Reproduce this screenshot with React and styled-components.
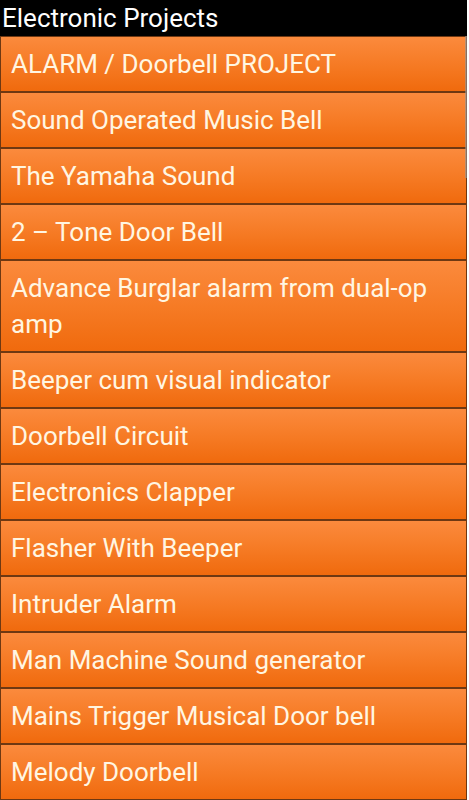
import React from 'react';
import styled, { createGlobalStyle } from 'styled-components';

const GlobalStyle = createGlobalStyle`
  html, body {
    margin: 0;
    padding: 0;
    background: #fff;
  }
  body {
    font-family: Roboto, "Noto Sans", sans-serif;
  }
`

const STScreen = styled.div`
  position: relative;
  width: 467px;
  height: 800px;
  overflow: hidden;
  display: flex;
  flex-direction: column;
`
const STHeader = styled.div`
  height: 36px;
  background: #000;
  color: #fff;
  font-size: 26px;
  line-height: 36px;
  padding-left: 2px;
  flex-shrink: 0;
  white-space: nowrap;
`
const STList = styled.div`
  display: flex;
  flex-direction: column;
`
const STItem = styled.div`
  border: 1px solid #6e3812;
  background: linear-gradient(to bottom, #fb8a3d 0%, #f67b25 50%, #f06a0d 100%);
  color: #fff6e2;
  font-size: 26px;
  line-height: 36px;
  padding: 9px 8px 9px 10px;
  flex-shrink: 0;
`
const STScrollbar = styled.div`
  position: absolute;
  right: 0;
  top: 36px;
  width: 2px;
  height: 142px;
  background: rgba(150, 150, 150, 0.6);
`

const projects = [
  'ALARM / Doorbell PROJECT',
  'Sound Operated Music Bell',
  'The Yamaha Sound',
  '2 – Tone Door Bell',
  'Advance Burglar alarm from dual-op amp',
  'Beeper cum visual indicator',
  'Doorbell Circuit',
  'Electronics Clapper',
  'Flasher With Beeper',
  'Intruder Alarm',
  'Man Machine Sound generator',
  'Mains Trigger Musical Door bell',
  'Melody Doorbell',
];

export default function App() {
  return <>
    <GlobalStyle />
    <STScreen>
      <STHeader>Electronic Projects</STHeader>
      <STList>
        {projects.map((title, index) => <STItem key={'project' + index}>{title}</STItem>)}
      </STList>
      <STScrollbar />
    </STScreen>
  </>;
}
